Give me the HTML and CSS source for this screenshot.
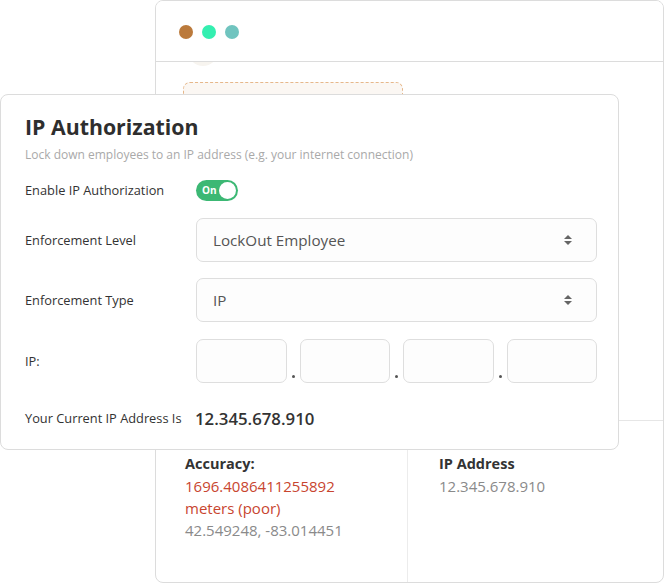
FILE: index.html
```html
<!DOCTYPE html>
<html>
<head>
<meta charset="utf-8">
<link rel="stylesheet" href="styles.css">
</head>
<body>
<div class="stage">
  <div class="window">
    <div class="win-header">
      <span class="dot dot-brown"></span>
      <span class="dot dot-green"></span>
      <span class="dot dot-teal"></span>
    </div>
    <div class="win-body">
      <div class="avatar"></div>
      <div class="dashed-box"></div>
      <div class="stats">
        <div class="stat-col stat-left">
          <div class="stat-title">Accuracy:</div>
          <div class="stat-red">1696.4086411255892</div>
          <div class="stat-red">meters (poor)</div>
          <div class="stat-gray">42.549248, -83.014451</div>
        </div>
        <div class="stat-col stat-right">
          <div class="stat-title">IP Address</div>
          <div class="stat-gray">12.345.678.910</div>
        </div>
      </div>
    </div>
  </div>

  <div class="card">
    <h1 class="card-title">IP Authorization</h1>
    <p class="card-sub">Lock down employees to an IP address (e.g. your internet connection)</p>

    <div class="row row-toggle">
      <div class="label">Enable IP Authorization</div>
      <div class="control">
        <div class="toggle"><span class="toggle-text">On</span><span class="knob"></span></div>
      </div>
    </div>

    <div class="row row-select1">
      <div class="label">Enforcement Level</div>
      <div class="control">
        <div class="select"><span>LockOut Employee</span><span class="arrows"><i class="up"></i><i class="down"></i></span></div>
      </div>
    </div>

    <div class="row row-select2">
      <div class="label">Enforcement Type</div>
      <div class="control">
        <div class="select"><span>IP</span><span class="arrows"><i class="up"></i><i class="down"></i></span></div>
      </div>
    </div>

    <div class="row row-ip">
      <div class="label">IP:</div>
      <div class="control ip-fields">
        <div class="ip-box"></div><div class="sep"><i></i></div>
        <div class="ip-box"></div><div class="sep"><i></i></div>
        <div class="ip-box"></div><div class="sep"><i></i></div>
        <div class="ip-box"></div>
      </div>
    </div>

    <div class="row row-current">
      <div class="label">Your Current IP Address Is</div>
      <div class="control current-ip">12.345.678.910</div>
    </div>
  </div>
</div>
</body>
</html>
```

FILE: styles.css
```css
* { box-sizing: border-box; }
html, body { margin: 0; padding: 0; background: #fff; }
body {
  font-family: "Open Sans", "Liberation Sans", sans-serif;
  color: #333;
}
.stage {
  position: relative;
  width: 664px;
  height: 583px;
  overflow: hidden;
}

/* background window */
.window {
  margin-left: 155px;
  width: 509px;
  height: 583px;
  border: 1px solid #dcdcdc;
  border-radius: 8px;
  display: flex;
  flex-direction: column;
  overflow: hidden;
}
.win-header {
  height: 61px;
  flex: none;
  border-bottom: 1px solid #dcdcdc;
  display: flex;
  align-items: center;
  gap: 9px;
  padding-left: 23px;
  padding-top: 2px;
  background: #fff;
  position: relative;
  z-index: 1;
}
.dot { width: 14px; height: 14px; border-radius: 50%; display: block; }
.dot-brown { background: #bb7a3c; }
.dot-green { background: #34efb0; }
.dot-teal { background: #70c4bf; }

.win-body {
  flex: 1;
  display: flex;
  flex-direction: column;
  overflow: hidden;
}
.avatar {
  width: 30px;
  height: 30px;
  border-radius: 50%;
  background: #f7f4ef;
  margin-top: -26px;
  margin-left: 32px;
  flex: none;
}
.dashed-box {
  width: 220px;
  height: 60px;
  margin-top: 16px;
  margin-left: 27px;
  border: 1px dashed #e6b78a;
  border-radius: 7px;
  background: #fbf7f3;
  flex: none;
}
.stats {
  margin-top: auto;
  height: 162px;
  border-top: 1px solid #e6e6e6;
  display: flex;
  flex: none;
}
.stat-col {
  padding-top: 32px;
  font-size: 15px;
  line-height: 22px;
}
.stat-left { width: 252px; padding-left: 29px; border-right: 1px solid #ececec; }
.stat-right { flex: 1; padding-left: 31px; }
.stat-title { font-weight: 700; color: #333; font-size: 14.5px; }
.stat-red { color: #c8452f; }
.stat-gray { color: #8a8a8a; }

/* front card */
.card {
  position: absolute;
  left: 0;
  top: 94px;
  width: 619px;
  height: 356px;
  background: #fff;
  border: 1px solid #dcdcdc;
  border-radius: 8px;
  padding: 18px 21px 0 24px;
}
.card-title {
  margin: 0;
  font-size: 21.3px;
  line-height: 28px;
  font-weight: 700;
  color: #2e2e2e;
}
.card-sub {
  margin: 6px 0 0;
  font-size: 12px;
  line-height: 16px;
  color: #a9a9a9;
}
.row {
  display: flex;
  align-items: center;
}
.label {
  width: 171px;
  flex: none;
  font-size: 12.8px;
  color: #333;
}
.control { flex: 1; display: flex; align-items: center; }
.row-toggle { margin-top: 17px; height: 20px; }
.row-select1 { margin-top: 18px; }
.row-select2 { margin-top: 16px; }
.row-ip { margin-top: 17px; }
.row-current { margin-top: 25px; height: 20px; }

.toggle {
  width: 42px;
  height: 21px;
  border-radius: 11px;
  background: #3cb874;
  display: flex;
  align-items: center;
  justify-content: space-between;
  padding: 0 2px 0 6px;
}
.toggle-text {
  color: #fff;
  font-size: 10px;
  font-weight: 700;
}
.knob {
  width: 17px;
  height: 17px;
  border-radius: 50%;
  background: #fff;
}

.select {
  flex: 1;
  height: 44px;
  border: 1px solid #dedede;
  border-radius: 7px;
  background: #fdfdfd;
  display: flex;
  align-items: center;
  justify-content: space-between;
  padding: 0 24px 0 16px;
  font-size: 15.2px;
  color: #555;
}
.arrows { display: flex; flex-direction: column; gap: 2px; }
.arrows i {
  display: block;
  width: 0; height: 0;
  border-left: 4px solid transparent;
  border-right: 4px solid transparent;
}
.arrows .up { border-bottom: 4px solid #666; }
.arrows .down { border-top: 4px solid #666; }

.ip-fields { align-items: stretch; height: 44px; }
.ip-box {
  flex: 1;
  border: 1px solid #dedede;
  border-radius: 7px;
  background: #fdfdfd;
}
.sep {
  width: 13px;
  flex: none;
  display: flex;
  justify-content: center;
  align-items: flex-end;
  padding-bottom: 5px;
}
.sep i {
  display: block;
  width: 3px;
  height: 3px;
  border-radius: 50%;
  background: #555;
}
.current-ip {
  font-size: 16.8px;
  font-weight: 600;
  color: #333;
  margin-left: -1px;
}
```
